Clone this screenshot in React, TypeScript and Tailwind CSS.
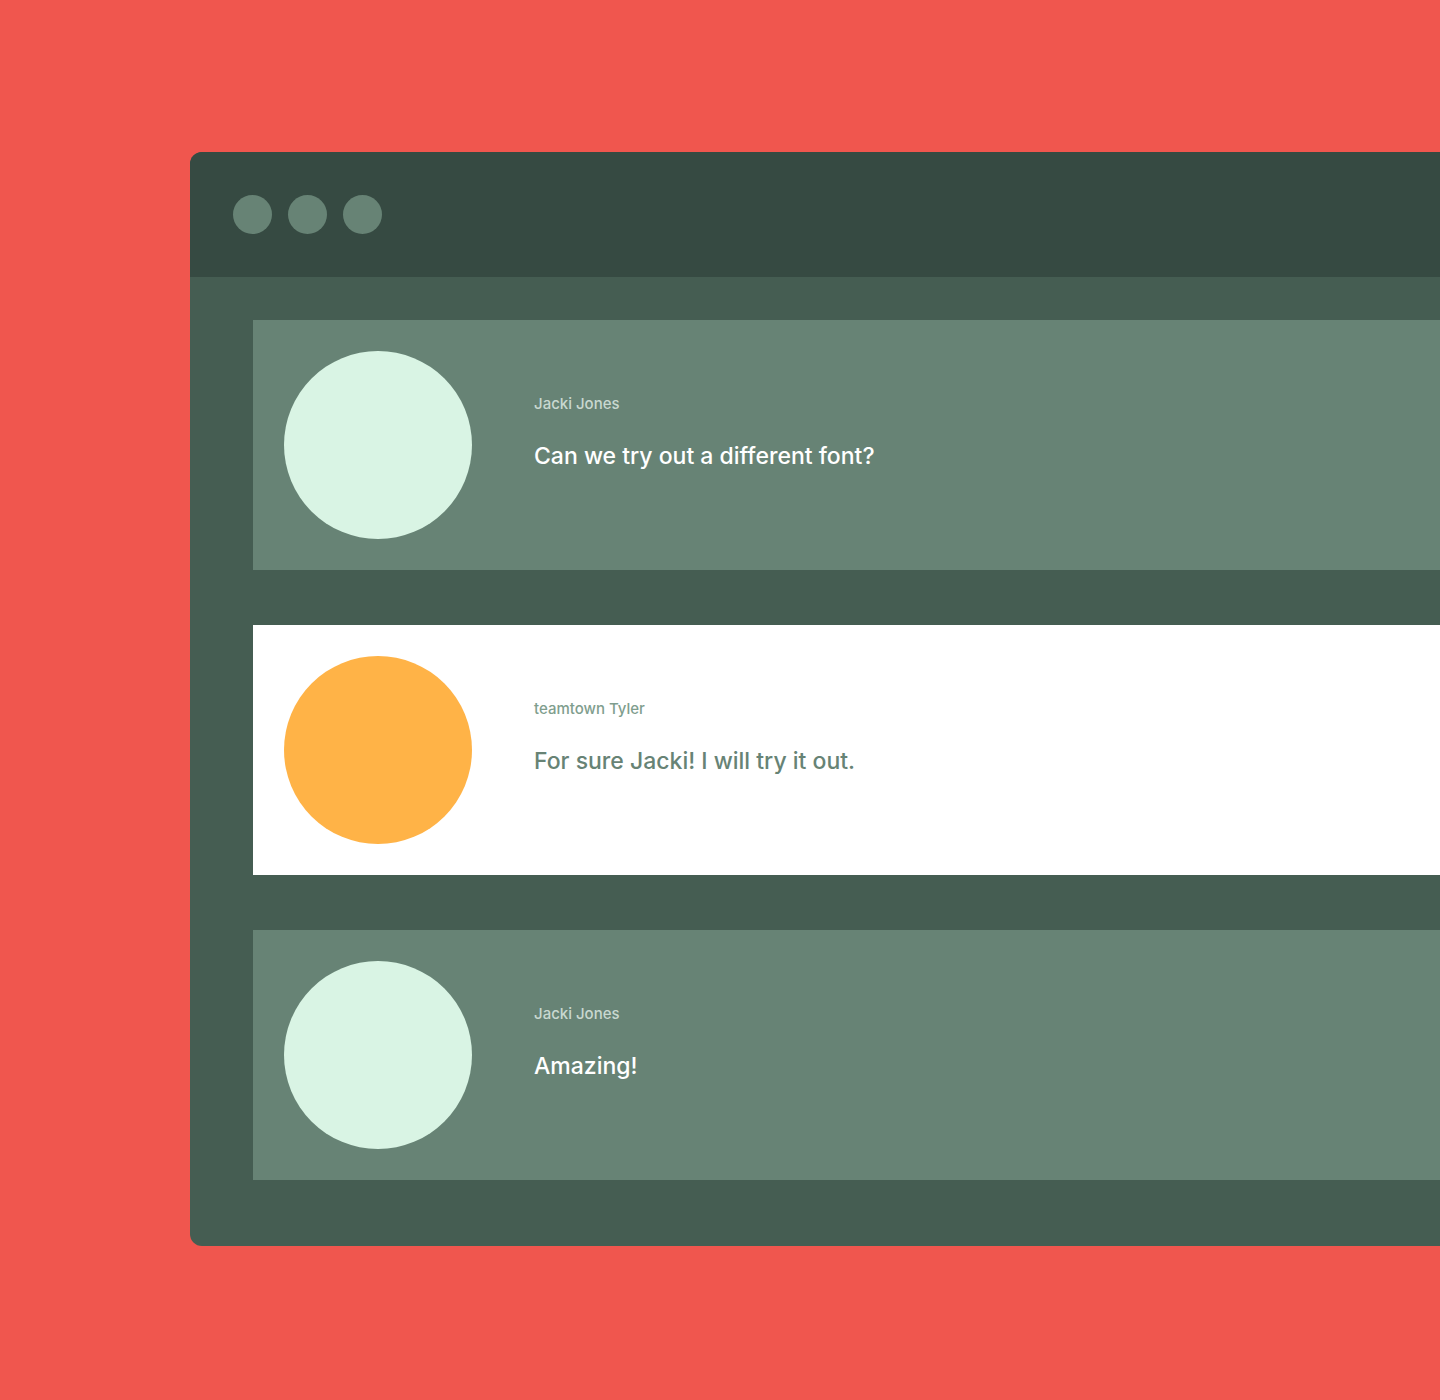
import React from "react";

type Msg = { name: string; text: string; light: boolean };

const msgs: Msg[] = [
  { name: "Jacki Jones", text: "Can we try out a different font?", light: false },
  { name: "teamtown Tyler", text: "For sure Jacki! I will try it out.", light: true },
  { name: "Jacki Jones", text: "Amazing!", light: false },
];

function Card({ m }: { m: Msg }) {
  return (
    <div
      className={
        m.light
          ? "flex h-[250px] items-start bg-white pl-[31px] pt-[31px]"
          : "flex h-[250px] items-start bg-[#678375] pl-[31px] pt-[31px]"
      }
    >
      <div
        className={
          m.light
            ? "h-[188px] w-[188px] shrink-0 rounded-full bg-[#FFB347]"
            : "h-[188px] w-[188px] shrink-0 rounded-full bg-[#D9F4E4]"
        }
      />
      <div className="ml-[62px] flex flex-col pt-[43px]">
        <div
          className={
            m.light
              ? "text-[15px] leading-[20px] font-medium text-[#7F9E8E]"
              : "text-[15px] leading-[20px] font-medium text-[#C9D8D0]"
          }
        >
          {m.name}
        </div>
        <div
          className={
            m.light
              ? "mt-[27px] text-[23px] leading-[30px] font-medium text-[#678375]"
              : "mt-[27px] text-[23px] leading-[30px] font-medium text-white"
          }
        >
          {m.text}
        </div>
      </div>
    </div>
  );
}

export default function App() {
  return (
    <div
      className="h-[1400px] w-[1440px] overflow-hidden bg-[#F0564E] pl-[190px] pt-[152px]"
      style={{ fontFamily: "Inter, 'Noto Sans', sans-serif" }}
    >
      <div className="w-[1300px] overflow-hidden rounded-l-[12px] bg-[#455D52]">
        <div className="flex h-[125px] items-start gap-[16px] bg-[#364A42] pl-[43px] pt-[43px]">
          <div className="h-[39px] w-[39px] rounded-full bg-[#678375]" />
          <div className="h-[39px] w-[39px] rounded-full bg-[#678375]" />
          <div className="h-[39px] w-[39px] rounded-full bg-[#678375]" />
        </div>
        <div className="flex flex-col gap-[55px] pb-[66px] pl-[63px] pt-[43px]">
          {msgs.map((m, i) => (
            <Card key={i} m={m} />
          ))}
        </div>
      </div>
    </div>
  );
}
